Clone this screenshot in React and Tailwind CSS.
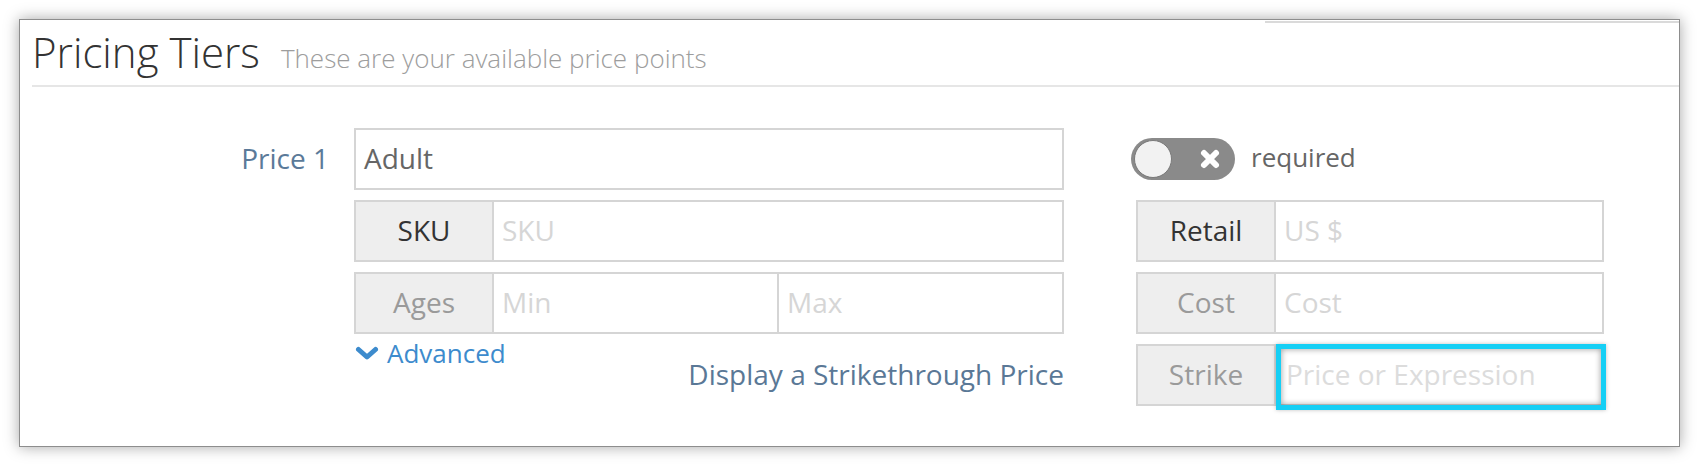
import React from "react";

const font = { fontFamily: '"Open Sans", "Noto Sans", Arial, sans-serif' };

function Addon({ label, dark }) {
  return (
    <div
      className={`w-[138px] shrink-0 bg-[#eeeeee] border-r-2 border-[#d5d5d5] flex items-center justify-center pb-[2px] text-[28px] ${
        dark ? "text-[#333333]" : "text-[#9a9a9a]"
      }`}
    >
      {label}
    </div>
  );
}

function Field({ text, placeholder, className = "" }) {
  return (
    <div className={`flex-1 flex items-center pl-[8px] pb-[2px] text-[28px] ${className}`}>
      {text ? (
        <span className="text-[#666666]">{text}</span>
      ) : (
        <span className="text-[#d6d6d6]">{placeholder}</span>
      )}
    </div>
  );
}

function Row({ children, className = "" }) {
  return (
    <div className={`flex h-[62px] border-2 border-[#d5d5d5] bg-white ${className}`}>
      {children}
    </div>
  );
}

function Toggle() {
  return (
    <div className="relative w-[104px] h-[42px] rounded-full bg-[#8a8a8a] shrink-0">
      <div className="absolute left-[3px] top-[2px] w-[38px] h-[38px] rounded-full bg-[#f2f2f2] border border-[#7a7a7a]" />
      <svg
        className="absolute left-[68px] top-[10px]"
        width="22"
        height="22"
        viewBox="0 0 22 22"
      >
        <path
          d="M5 5 L17 17 M17 5 L5 17"
          stroke="#ffffff"
          strokeWidth="6"
          strokeLinecap="round"
        />
      </svg>
    </div>
  );
}

export default function App() {
  return (
    <div className="w-[1700px] h-[466px] bg-white pt-[19px] pl-[19px]" style={font}>
      <div className="relative w-[1661px] h-[428px] bg-white border border-[#8d8d8d] shadow-[0_0_14px_rgba(0,0,0,0.35)]">
        <div className="absolute top-[1px] right-0 w-[414px] h-[2px] bg-[#dadada]" />
        {/* Header */}
        <div className="flex items-baseline pl-[12px] pt-[4px] h-[65px]">
          <span className="text-[42px] leading-[56px] font-light text-[#333333]">
            Pricing Tiers
          </span>
          <span className="ml-[21px] text-[26px] font-light text-[#9d9d9d]">
            These are your available price points
          </span>
        </div>
        <div className="ml-[12px] h-[2px] bg-[#e6e6e6]" />

        {/* Form */}
        <div className="flex pt-[41px]">
          <div className="w-[309px] h-[62px] flex items-center justify-end pb-[2px] text-[28px] text-[#5b7a99]">
            Price 1
          </div>

          <div className="ml-[25px] w-[710px] flex flex-col gap-[10px]">
            <Row>
              <Field text="Adult" />
            </Row>
            <Row>
              <Addon label="SKU" dark />
              <Field placeholder="SKU" />
            </Row>
            <Row>
              <Addon label="Ages" />
              <Field placeholder="Min" className="border-r-2 border-[#d5d5d5]" />
              <Field placeholder="Max" />
            </Row>
            <div>
              <div className="flex items-center h-[24px] leading-[24px] text-[26px] text-[#3d8bcd] -mt-[3px]">
                <svg width="24" height="14" viewBox="0 0 24 14" className="ml-[1px] mr-[8px]">
                  <path
                    d="M3.5 3.5 L12 11 L20.5 3.5"
                    fill="none"
                    stroke="#3d8bcd"
                    strokeWidth="5"
                    strokeLinecap="round"
                    strokeLinejoin="round"
                  />
                </svg>
                Advanced
              </div>
              <div className="text-right h-[24px] leading-[24px] text-[28px] text-[#5a7896] -mt-[3px]">
                Display a Strikethrough Price
              </div>
            </div>
          </div>

          <div className="ml-[67px] w-[473px] flex flex-col gap-[10px]">
            <div className="h-[62px] flex items-center">
              <Toggle />
              <span className="ml-[16px] pb-[4px] text-[26px] text-[#666666]">required</span>
            </div>
            <Row className="ml-[5px] w-[468px]">
              <Addon label="Retail" dark />
              <Field placeholder="US $" />
            </Row>
            <Row className="ml-[5px] w-[468px]">
              <Addon label="Cost" />
              <Field placeholder="Cost" />
            </Row>
            <Row className="ml-[5px] w-[468px]">
              <Addon label="Strike" />
              <div className="relative flex-1 flex items-center pl-[10px] pb-[2px] text-[28px] text-[#dcdcdc]">
                Price or Expression
                <div className="absolute left-0 -top-[2px] -right-[4px] -bottom-[6px] border-[5px] border-[#15cff5] shadow-[inset_0_0_6px_rgba(0,0,0,0.4),0_0_4px_rgba(0,0,0,0.25)]" />
              </div>
            </Row>
          </div>
        </div>
      </div>
    </div>
  );
}
